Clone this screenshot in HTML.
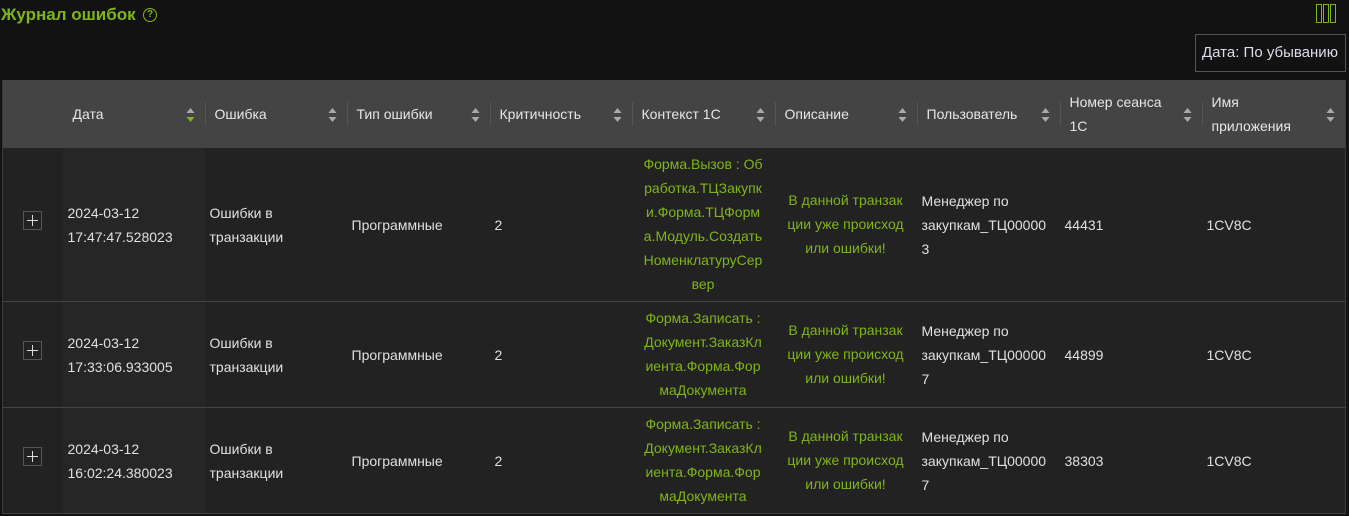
<!DOCTYPE html>
<html><head><meta charset="utf-8"><style>
*{margin:0;padding:0;box-sizing:border-box}
body{width:1349px;height:516px;background:#121212;font-family:"Liberation Sans","DejaVu Sans",sans-serif;font-size:14px;color:#e0e0e0;overflow:hidden;position:relative}
.title{position:absolute;left:1px;top:5px;font-size:17px;font-weight:bold;color:#7fb51a}
.q{position:absolute;left:143px;top:8px;width:14px;height:14px;border:1.5px solid #7fb51a;border-radius:50%;color:#7fb51a;font-size:10px;line-height:11px;text-align:center;font-weight:bold}
.cols{position:absolute;left:1316px;top:4px}
.cols span{position:absolute;top:0;width:6px;height:19px;border:1.5px solid #7fb51a}
.sortbox{position:absolute;left:1195px;top:34px;width:151px;height:38px;border:1px solid #555;color:#dde;font-size:15px;line-height:36px;padding-left:6px;white-space:nowrap}
table{position:absolute;left:2px;top:80px;border-collapse:collapse;table-layout:fixed;width:1343px;border-left:1px solid #3a3a3a;border-right:1px solid #3a3a3a}
th{background:#444;height:68px;font-weight:normal;text-align:left;padding-left:10px;color:#e6e6e6;line-height:24px;position:relative}
th .sep{position:absolute;left:0;top:22px;width:1px;height:24px;background:#555}
th .s{position:absolute;right:10px;top:28px;width:9px;height:14px}
td{background:#222;border-bottom:1px solid #444;padding-left:5px;line-height:24px;vertical-align:middle;padding-top:2px}
td.d{background:#262626}
td.c{color:#7fb51a;text-align:center;padding:0 4px}
.pl{display:inline-block;width:19px;height:19px;border:1px solid #555;margin-left:20px;position:relative}
.pl:before{content:"";position:absolute;left:3px;top:8px;width:11px;height:1px;background:#ddd}
.pl:after{content:"";position:absolute;left:8px;top:3px;width:1px;height:11px;background:#ddd}
</style></head><body>
<div class="title">Журнал ошибок</div><div class="q">?</div>
<div class="cols"><span style="left:0"></span><span style="left:7px"></span><span style="left:14px"></span></div>
<div class="sortbox">Дата: По убыванию</div>
<table>
<colgroup><col style="width:60px"><col style="width:142px"><col style="width:142px"><col style="width:143px"><col style="width:142px"><col style="width:143px"><col style="width:142px"><col style="width:143px"><col style="width:142px"><col style="width:144px"></colgroup>
<tr>
<th></th>
<th>Дата<svg class="s" viewBox="0 0 8 14"><path d="M0 5L4 0L8 5Z" fill="#aaa"/><path d="M0 9L8 9L4 14Z" fill="#7fb51a"/></svg></th>
<th><span class="sep"></span>Ошибка<svg class="s" viewBox="0 0 8 14"><path d="M0 5L4 0L8 5Z" fill="#aaa"/><path d="M0 9L8 9L4 14Z" fill="#aaa"/></svg></th>
<th><span class="sep"></span>Тип ошибки<svg class="s" viewBox="0 0 8 14"><path d="M0 5L4 0L8 5Z" fill="#aaa"/><path d="M0 9L8 9L4 14Z" fill="#aaa"/></svg></th>
<th><span class="sep"></span>Критичность<svg class="s" viewBox="0 0 8 14"><path d="M0 5L4 0L8 5Z" fill="#aaa"/><path d="M0 9L8 9L4 14Z" fill="#aaa"/></svg></th>
<th><span class="sep"></span>Контекст 1С<svg class="s" viewBox="0 0 8 14"><path d="M0 5L4 0L8 5Z" fill="#aaa"/><path d="M0 9L8 9L4 14Z" fill="#aaa"/></svg></th>
<th><span class="sep"></span>Описание<svg class="s" viewBox="0 0 8 14"><path d="M0 5L4 0L8 5Z" fill="#aaa"/><path d="M0 9L8 9L4 14Z" fill="#aaa"/></svg></th>
<th><span class="sep"></span>Пользователь<svg class="s" viewBox="0 0 8 14"><path d="M0 5L4 0L8 5Z" fill="#aaa"/><path d="M0 9L8 9L4 14Z" fill="#aaa"/></svg></th>
<th><span class="sep"></span>Номер сеанса<br>1С<svg class="s" viewBox="0 0 8 14"><path d="M0 5L4 0L8 5Z" fill="#aaa"/><path d="M0 9L8 9L4 14Z" fill="#aaa"/></svg></th>
<th><span class="sep"></span>Имя<br>приложения<svg class="s" viewBox="0 0 8 14"><path d="M0 5L4 0L8 5Z" fill="#aaa"/><path d="M0 9L8 9L4 14Z" fill="#aaa"/></svg></th>
</tr>
<tr style="height:153px">
<td style="padding:0"><span class="pl"></span></td>
<td class="d">2024-03-12<br>17:47:47.528023</td><td>Ошибки в<br>транзакции</td><td>Программные</td><td>2</td>
<td class="c">Форма.Вызов : Об<br>работка.ТЦЗакупк<br>и.Форма.ТЦФорм<br>а.Модуль.Создать<br>НоменклатуруСер<br>вер</td>
<td class="c">В данной транзак<br>ции уже происход<br>или ошибки!</td>
<td>Менеджер по<br>закупкам_ТЦ00000<br>3</td><td>44431</td><td>1CV8C</td>
</tr>
<tr style="height:106px">
<td style="padding:0"><span class="pl"></span></td>
<td class="d">2024-03-12<br>17:33:06.933005</td><td>Ошибки в<br>транзакции</td><td>Программные</td><td>2</td>
<td class="c">Форма.Записать :<br>Документ.ЗаказКл<br>иента.Форма.Фор<br>маДокумента</td>
<td class="c">В данной транзак<br>ции уже происход<br>или ошибки!</td>
<td>Менеджер по<br>закупкам_ТЦ00000<br>7</td><td>44899</td><td>1CV8C</td>
</tr>
<tr style="height:106px">
<td style="padding:0"><span class="pl"></span></td>
<td class="d">2024-03-12<br>16:02:24.380023</td><td>Ошибки в<br>транзакции</td><td>Программные</td><td>2</td>
<td class="c">Форма.Записать :<br>Документ.ЗаказКл<br>иента.Форма.Фор<br>маДокумента</td>
<td class="c">В данной транзак<br>ции уже происход<br>или ошибки!</td>
<td>Менеджер по<br>закупкам_ТЦ00000<br>7</td><td>38303</td><td>1CV8C</td>
</tr>
</table>
</body></html>
